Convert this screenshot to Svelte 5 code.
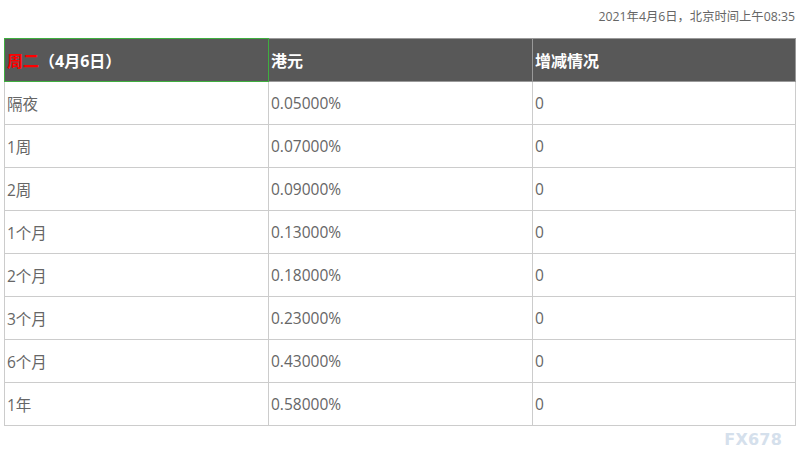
<script>
  const rows = [
    ['隔夜', '0.05000%', '0'],
    ['1周', '0.07000%', '0'],
    ['2周', '0.09000%', '0'],
    ['1个月', '0.13000%', '0'],
    ['2个月', '0.18000%', '0'],
    ['3个月', '0.23000%', '0'],
    ['6个月', '0.43000%', '0'],
    ['1年', '0.58000%', '0'],
  ]
</script>

<div class="page">
  <div class="stamp">2021年4月6日，北京时间上午08:35</div>
  <table>
    <colgroup>
      <col class="c1" />
      <col class="c2" />
      <col />
    </colgroup>
    <thead>
      <tr>
        <th class="first"><span class="red">周二</span>（4月6日）</th>
        <th>港元</th>
        <th>增减情况</th>
      </tr>
    </thead>
    <tbody>
      {#each rows as row}
        <tr>
          {#each row as cell}
            <td>{cell}</td>
          {/each}
        </tr>
      {/each}
    </tbody>
  </table>
  <div class="mark">FX678</div>
</div>

<style>
  :global(body) {
    margin: 0;
    background: #fff;
  }

  .page {
    position: relative;
    width: 799px;
    height: 461px;
    overflow: hidden;
    padding: 8px 3px 0 4px;
    box-sizing: border-box;
    font-family: "Open Sans", "Noto Sans CJK SC", sans-serif;
    color: #666;
  }

  .stamp {
    height: 30px;
    padding-right: 1px;
    line-height: 17px;
    font-size: 12.3px;
    text-align: right;
    color: #666;
  }

  table {
    width: 792px;
    border-collapse: collapse;
    table-layout: fixed;
  }

  .c1,
  .c2 {
    width: 264px;
  }

  th {
    height: 42px;
    padding: 0 2px;
    background: #585858;
    border: 1px solid #999;
    color: #fff;
    font-size: 16px;
    font-weight: 700;
    text-align: left;
  }

  th.first {
    border: 1px solid #3fae3f;
  }

  .red {
    color: #f00;
  }

  td {
    height: 42px;
    padding: 0 2px;
    border: 1px solid #ccc;
    font-size: 15.5px;
    color: #666;
  }

  .mark {
    position: absolute;
    right: 17px;
    top: 430px;
    font-family: "DejaVu Sans", sans-serif;
    font-size: 16px;
    font-weight: 700;
    letter-spacing: 0.2px;
    color: #d5e0ec;
  }
</style>
